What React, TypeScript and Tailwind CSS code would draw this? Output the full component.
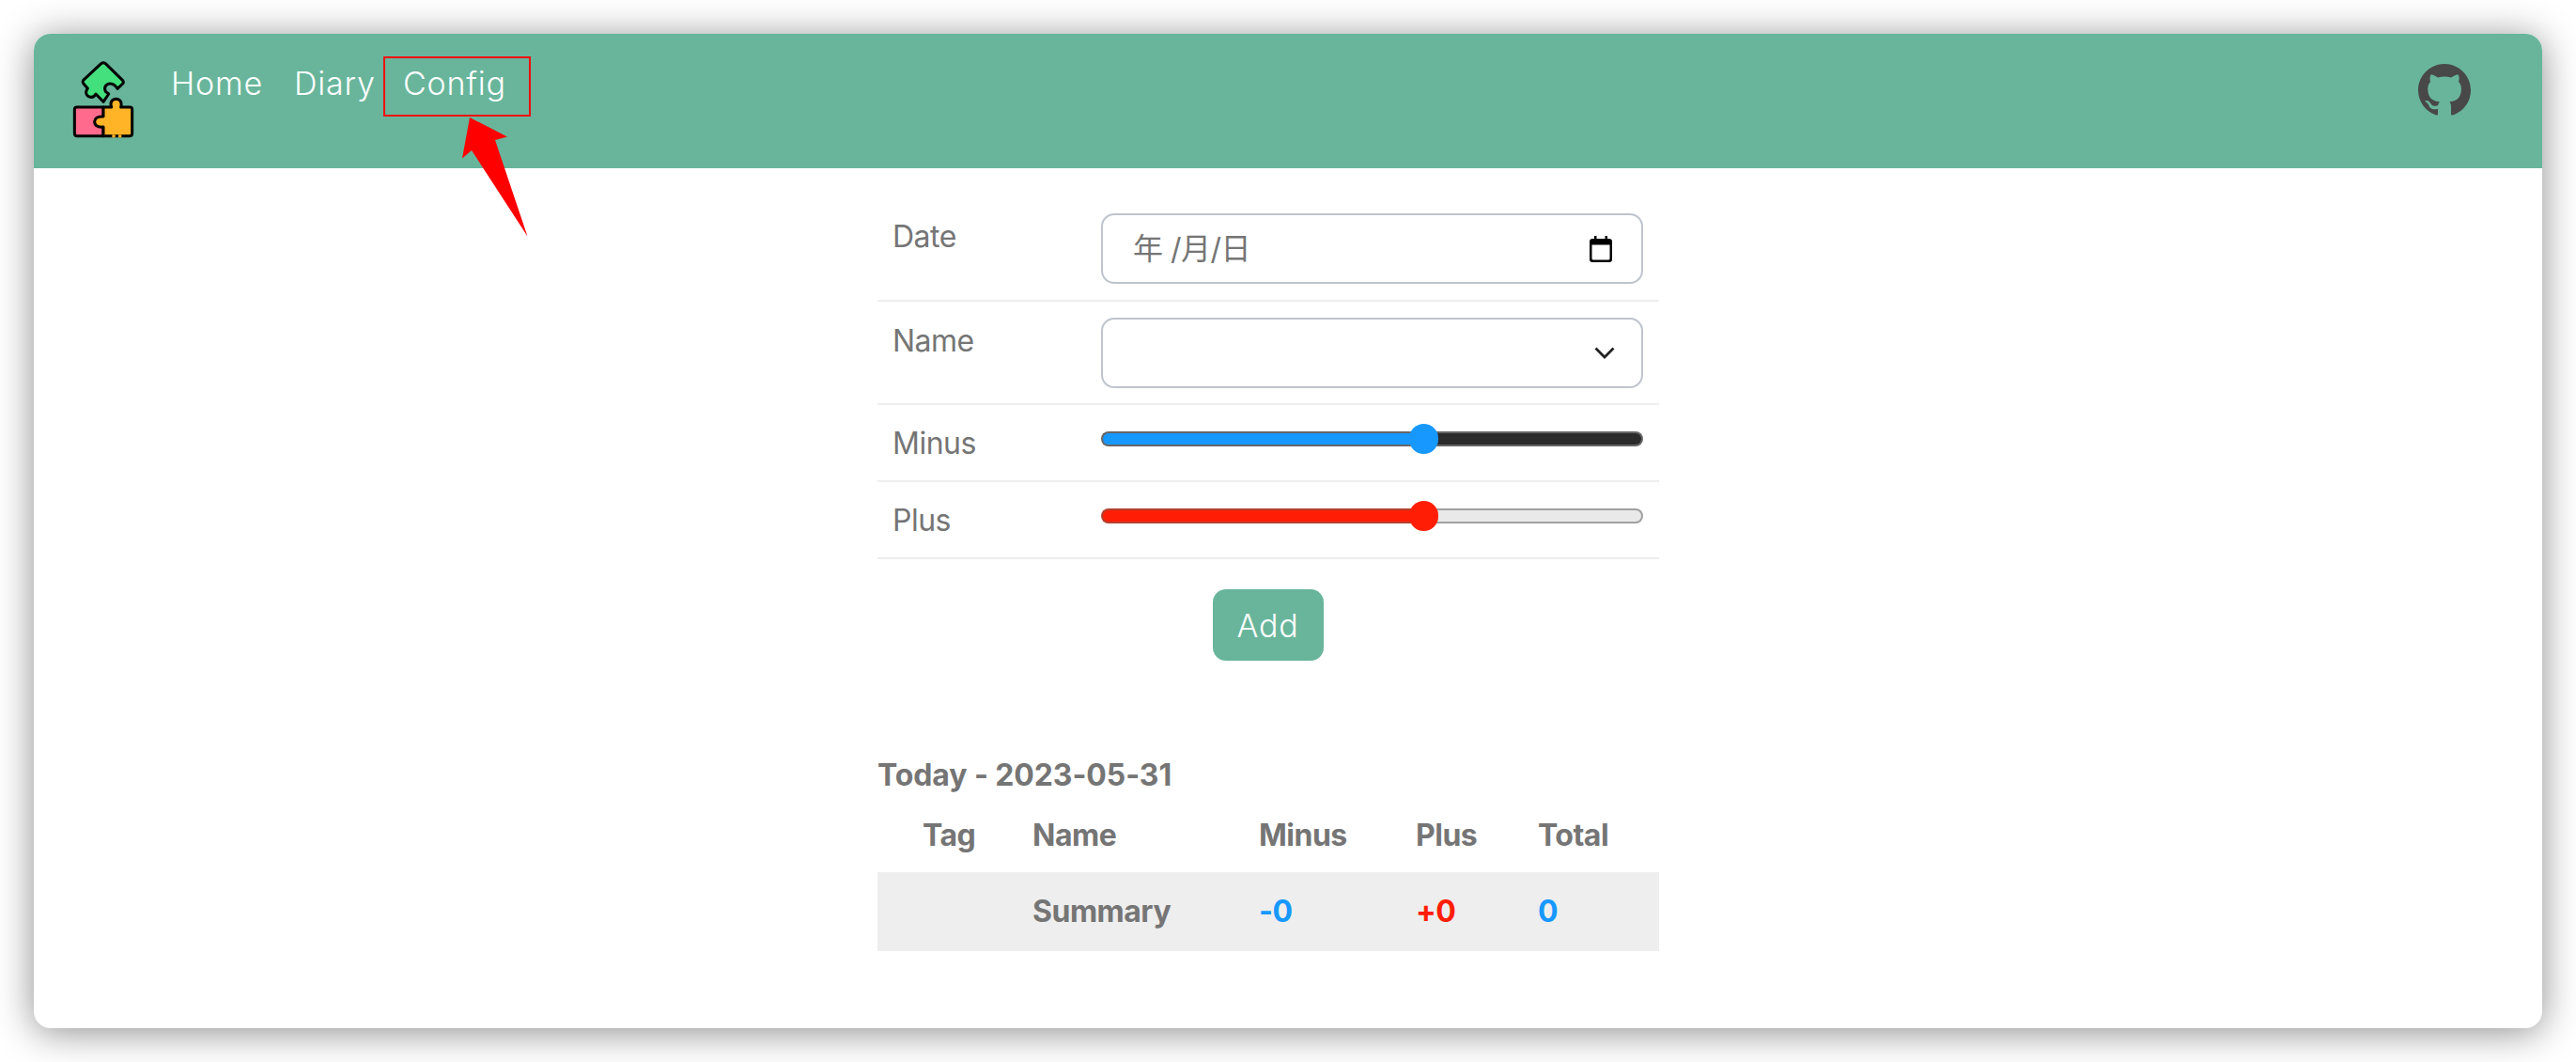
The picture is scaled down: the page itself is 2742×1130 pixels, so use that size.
import { BsGithub } from 'react-icons/bs';

function Logo() {
  return (
    <svg viewBox="0 0 330 330" className="w-[110px] h-[110px] -ml-[18px] -mt-[16px] shrink-0">
      <g stroke="#000" strokeWidth="9" strokeLinejoin="round" strokeLinecap="round">
        <path
          d="M143 53 Q150 48 157 53 L212 107 Q216 112 212 117 L195 133 Q183 113 165 118 Q150 125 157 142 L167 150 L150 175 L126 150 Q118 165 103 158 Q88 148 100 132 L86 116 Q83 110 86 106 Z"
          fill="#43e07d"
        />
        <path d="M150 192 L66 192 Q58 192 58 200 L58 275 Q58 284 67 284 L150 284 Z" fill="#ff6a8d" />
        <path
          d="M150 192 L176 192 Q168 170 190 166 Q212 168 206 192 L235 192 Q242 192 242 200 L242 275 Q242 284 233 284 L150 284 L150 255 Q122 258 122 238 Q124 220 150 222 Z"
          fill="#ffb327"
        />
      </g>
      <g fill="#ffb327">
        <rect x="178" y="280" width="10" height="9" />
        <rect x="198" y="280" width="10" height="9" />
      </g>
    </svg>
  );
}

function CalendarIcon() {
  return (
    <svg viewBox="0 0 24 28" className="w-[24px] h-[28px]">
      <path
        d="M5 0h2.5v3h9V0H19v3h2a3 3 0 0 1 3 3v19a3 3 0 0 1-3 3H3a3 3 0 0 1-3-3V6a3 3 0 0 1 3-3h2V0Zm-2.5 9.5V24a1.5 1.5 0 0 0 1.5 1.5h16a1.5 1.5 0 0 0 1.5-1.5V9.5h-19Z"
        fill="#000"
      />
    </svg>
  );
}

function Chevron() {
  return (
    <svg viewBox="0 0 22 13" className="w-[22px] h-[13px]" fill="none">
      <path d="M1.5 1.5 11 11l9.5-9.5" stroke="#222" strokeWidth="2.8" />
    </svg>
  );
}

type SliderProps = {
  fill: string;
  fillBorder: string;
  rest: string;
  restBorder: string;
};

function Slider({ fill, fillBorder, rest, restBorder }: SliderProps) {
  return (
    <div className="relative w-[577px] h-[40px] flex items-center">
      <div className="flex w-full h-[16px]">
        <div className={`w-[59.5%] rounded-l-full border-2 border-r-0 ${fill} ${fillBorder}`} />
        <div className={`flex-1 rounded-r-full border-2 border-l-0 ${rest} ${restBorder}`} />
      </div>
      <div className={`absolute left-[328px] top-[4px] w-[31px] h-[32px] rounded-full ${fill}`} />
    </div>
  );
}

function FormRow({ label, children, padding }: { label: string; children: React.ReactNode; padding: string }) {
  return (
    <div className={`flex items-start border-b-2 border-[#eeeeee] ${padding}`}>
      <div className="w-[238px] pl-[16px] pt-[1px] leading-[48px] h-[48px] tracking-[-0.5px]">{label}</div>
      {children}
    </div>
  );
}

export default function App() {
  return (
    <div className="min-h-screen bg-white pt-[36px] px-[36px] font-['Inter','Noto_Sans_CJK_SC',sans-serif] text-[32px] text-[#757575] overflow-hidden">
      <div className="relative h-[1058px] rounded-[18px] bg-white overflow-visible shadow-[0_4px_40px_rgba(0,0,0,0.45)]">
        <header className="relative flex items-start h-[143px] bg-[#68b59b] rounded-t-[18px] font-light text-white text-[34px]">
          <div className="ml-[42px] mt-[30px]">
            <Logo />
          </div>
          <nav className="flex mt-[29px] ml-[12px] leading-[48px] tracking-[0.8px]">
            <a className="w-[131px]">Home</a>
            <a className="w-[116px]">Diary</a>
            <a>Config</a>
          </nav>
          <BsGithub className="absolute right-[76px] top-[32px] text-[#484848]" size={56} />
        </header>

        <main className="ml-[898px] w-[832px] pt-[31px]">
          <FormRow label="Date" padding="pt-[17px] pb-[17px]">
            <div className="flex items-center justify-between w-[577px] h-[75px] rounded-[14px] border-2 border-[#bfc4cd] pl-[32px] pr-[31px] text-[#757575]">
              <span className="text-[32px] tracking-[-0.5px]">年 /月/日</span>
              <CalendarIcon />
            </div>
          </FormRow>
          <FormRow label="Name" padding="pt-[17px] pb-[16px]">
            <div className="flex items-center justify-end w-[577px] h-[75px] rounded-[14px] border-2 border-[#bfc4cd] pr-[28px]">
              <Chevron />
            </div>
          </FormRow>
          <FormRow label="Minus" padding="pt-[16px] pb-[16px]">
            <Slider fill="bg-[#1798ff]" fillBorder="border-[#666666]" rest="bg-[#2b2b2b]" restBorder="border-[#666666]" />
          </FormRow>
          <FormRow label="Plus" padding="pt-[16px] pb-[16px]">
            <Slider fill="bg-[#ff1e05]" fillBorder="border-[#b3402f]" rest="bg-[#e9e9e9]" restBorder="border-[#a0a0a0]" />
          </FormRow>

          <div className="flex justify-center mt-[32px] pr-[1px]">
            <button className="w-[118px] h-[76px] rounded-[14px] bg-[#68b59b] font-light text-white text-[34px] tracking-[0.8px]">
              Add
            </button>
          </div>

          <h2 className="mt-[98px] font-bold leading-[48px] tracking-[-0.1px]">Today - 2023-05-31</h2>
          <table className="w-full table-fixed font-bold text-left tracking-[-0.5px]">
            <thead>
              <tr className="h-[79px]">
                <th className="w-[165px] pl-[48px] font-bold">Tag</th>
                <th className="w-[241px] font-bold">Name</th>
                <th className="w-[167px] font-bold">Minus</th>
                <th className="w-[130px] font-bold">Plus</th>
                <th className="font-bold">Total</th>
              </tr>
            </thead>
            <tbody>
              <tr className="h-[84px] bg-[#eeeeee]">
                <td />
                <td>Summary</td>
                <td className="text-[#1798ff]">-0</td>
                <td className="text-[#ff1e05]">+0</td>
                <td className="text-[#1798ff]">0</td>
              </tr>
            </tbody>
          </table>
        </main>

        {/* annotation over the nav */}
        <div className="absolute left-[372px] top-[24px] w-[157px] h-[64px] border-2 border-[#f20d0d]" />
        <svg className="absolute left-[450px] top-[85px] w-[120px] h-[134px]" viewBox="0 0 120 134">
          <path d="M14 4 54 24.5 41 28 75.5 130.500 16 39 6 47.500Z" fill="#ff0000" />
        </svg>
      </div>
    </div>
  );
}
